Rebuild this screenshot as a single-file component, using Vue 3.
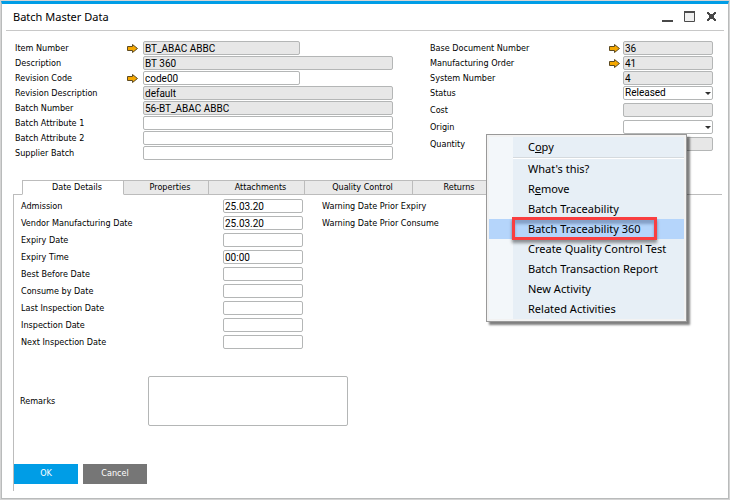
<script setup>
import { ref } from 'vue'

const leftFields = ref([
  { id: 'item', label: 'Item Number', value: 'BT_ABAC ABBC', locked: true, short: true, link: true },
  { id: 'desc', label: 'Description', value: 'BT 360', locked: true },
  { id: 'rev', label: 'Revision Code', value: 'code00', short: true, link: true },
  { id: 'revdesc', label: 'Revision Description', value: 'default', locked: true },
  { id: 'batch', label: 'Batch Number', value: '56-BT_ABAC ABBC', locked: true },
  { id: 'attr1', label: 'Batch Attribute 1', value: '' },
  { id: 'attr2', label: 'Batch Attribute 2', value: '' },
  { id: 'supplier', label: 'Supplier Batch', value: '' },
])

const rightFields = ref([
  { id: 'base', label: 'Base Document Number', value: '36', locked: true, link: true },
  { id: 'order', label: 'Manufacturing Order', value: '41', locked: true, link: true },
  { id: 'system', label: 'System Number', value: '4', locked: true },
  { id: 'status', label: 'Status', value: 'Released', options: ['Released', 'Locked'] },
  { id: 'cost', label: 'Cost', value: '', locked: true, spaced: true },
  { id: 'origin', label: 'Origin', value: '', options: ['', 'Production'], spaced: true },
  { id: 'quantity', label: 'Quantity', value: '', locked: true, spaced: true },
])

const dates = ref([
  { id: 'admission', label: 'Admission', value: '25.03.20', note: 'Warning Date Prior Expiry' },
  { id: 'vendor', label: 'Vendor Manufacturing Date', value: '25.03.20', note: 'Warning Date Prior Consume' },
  { id: 'expiry', label: 'Expiry Date', value: '' },
  { id: 'time', label: 'Expiry Time', value: '00:00' },
  { id: 'best', label: 'Best Before Date', value: '' },
  { id: 'consume', label: 'Consume by Date', value: '' },
  { id: 'last', label: 'Last Inspection Date', value: '' },
  { id: 'inspection', label: 'Inspection Date', value: '' },
  { id: 'next', label: 'Next Inspection Date', value: '' },
])

const remarks = ref('')
const tabs = ['Date Details', 'Properties', 'Attachments', 'Quality Control', 'Returns']
const activeTab = ref('Date Details')
const menuItems = [
  'What\'s this?',
  'Remove',
  'Batch Traceability',
  'Batch Traceability 360',
  'Create Quality Control Test',
  'Batch Transaction Report',
  'New Activity',
  'Related Activities',
]
</script>

<template>
  <main class="window">
    <header class="titlebar">
      <h1>Batch Master Data</h1>
      <div class="controls">
        <button type="button" aria-label="Minimize">
          <svg viewBox="0 0 12 12"><path d="M0 9h11v2H0z" fill="#484848" /></svg>
        </button>
        <button type="button" aria-label="Maximize">
          <svg viewBox="0 0 12 12">
            <path d="M.5 .5h10v10H.5z" fill="#f0f0f0" stroke="#4b4b4b" />
            <path d="M0 0h11v2H0z" fill="#4b4b4b" />
          </svg>
        </button>
        <button type="button" aria-label="Close">
          <svg viewBox="0 0 12 12"><path d="M1 1h2v1h1v1h3V2h1V1h2v2H9v1H8v3h1v1h1v2H8V9H7V8H4v1H3v1H1V8h1V7h1V4H2V3H1z" fill="#484848" /></svg>
        </button>
      </div>
    </header>

    <section class="summary">
      <div class="fields">
        <div v-for="f in leftFields" :key="f.id" class="row">
          <label :for="f.id">{{ f.label }}</label>
          <svg v-if="f.link" class="arrow" viewBox="0 0 11 9"><path d="M.5 2.500h5v-2l5 4-5 4v-2h-5z" fill="#f5a800" stroke="#5c4a22" /></svg>
          <input :id="f.id" v-model="f.value" type="text" :readonly="f.locked" :class="{ locked: f.locked, short: f.short }">
        </div>
      </div>
      <div class="fields side">
        <div v-for="f in rightFields" :key="f.id" class="row" :class="{ spaced: f.spaced }">
          <label :for="f.id">{{ f.label }}</label>
          <svg v-if="f.link" class="arrow" viewBox="0 0 11 9"><path d="M.5 2.500h5v-2l5 4-5 4v-2h-5z" fill="#f5a800" stroke="#5c4a22" /></svg>
          <select v-if="f.options" :id="f.id" v-model="f.value">
            <option v-for="o in f.options" :key="o" :value="o">{{ o }}</option>
          </select>
          <input v-else :id="f.id" v-model="f.value" type="text" readonly class="locked">
        </div>
      </div>
    </section>

    <nav class="tabs" role="tablist">
      <button
        v-for="t in tabs" :key="t" type="button" role="tab"
        :aria-selected="t === activeTab" :class="{ active: t === activeTab }"
        @click="activeTab = t"
      >{{ t }}</button>
    </nav>

    <section class="panel">
      <div v-for="d in dates" :key="d.id" class="date-row">
        <label :for="d.id">{{ d.label }}</label>
        <input :id="d.id" v-model="d.value" type="text">
        <span>{{ d.note }}</span>
      </div>
      <div class="remarks">
        <label for="remarks">Remarks</label>
        <textarea id="remarks" v-model="remarks"></textarea>
      </div>
      <footer class="actions">
        <button type="button" class="ok">OK</button>
        <button type="button" class="cancel">Cancel</button>
      </footer>
    </section>

    <div class="menu" role="menu">
      <button type="button" role="menuitem">C<u>o</u>py</button>
      <hr>
      <button
        v-for="m in menuItems" :key="m" type="button" role="menuitem"
        :class="{ selected: m === 'Batch Traceability 360' }"
      ><template v-if="m === 'Remove'">R<u>e</u>move</template><template v-else>{{ m }}</template></button>
    </div>
  </main>
</template>

<style>
body {
  background: #d4d4d4;
}
</style>

<style scoped>
.window {
  position: relative;
  box-sizing: border-box;
  display: flex;
  flex-direction: column;
  min-height: calc(100vh - 2px);
  margin: 1px;
  border: 1px solid #b9bbbb;
  border-top: 3px solid #009de6;
  background: #fff;
  color: #000;
  font: 9px/14px "DejaVu Sans Condensed", Tahoma, sans-serif;
}
button, input, select, textarea {
  box-sizing: border-box;
  margin: 0;
  font: inherit;
  color: inherit;
}
.titlebar {
  display: flex;
  align-items: center;
  justify-content: space-between;
  height: 26px;
  margin: 0 4px;
  padding: 0 6px 0 7px;
  border-bottom: 1px solid #c8c8c8;
}
h1 {
  margin: 0;
  font: 11px/26px "Noto Sans", "Segoe UI", sans-serif;
}
.controls {
  display: flex;
  gap: 10px;
}
.controls button {
  width: 12px;
  height: 12px;
  padding: 0;
  border: 0;
  background: none;
}
.controls svg {
  display: block;
  width: 12px;
  height: 12px;
}
.summary {
  display: grid;
  grid-template-columns: 378px 283px;
  justify-content: space-between;
  padding: 10px 15px 0 13px;
}
.fields {
  display: flex;
  flex-direction: column;
  gap: 1px;
}
.row {
  display: flex;
  align-items: center;
  height: 14px;
}
.row label {
  flex: 1;
}
.arrow {
  width: 11px;
  height: 9px;
  margin-right: 5px;
}
.side .arrow {
  margin-right: 3px;
}
.spaced {
  margin-top: 2px;
}
input, select, textarea {
  padding: 0 1px;
  border: 1px solid #b4b6b6;
  border-radius: 2px;
  background: #fff;
  font: 10px/12px Roboto, Tahoma, sans-serif;
}
input, select {
  height: 14px;
}
.locked {
  background: #e7e7e7;
}
.fields input {
  width: 250px;
}
.fields .short {
  width: 157px;
  margin-right: 93px;
}
.side input, .side select {
  width: 90px;
}
select {
  appearance: none;
}
.row:has(select)::after {
  content: "";
  width: 0;
  margin-left: -8px;
  margin-right: 2px;
  border: 3px solid transparent;
  border-top-color: #303030;
  border-bottom: 0;
  pointer-events: none;
}
.tabs {
  display: flex;
  height: 15px;
  margin: 20px 6px 0 11px;
  padding-left: 9px;
  background: linear-gradient(#bcbcbc, #bcbcbc) bottom / 100% 1px no-repeat;
}
.tabs button {
  width: 85px;
  padding: 0 0 0 8px;
  border: 1px solid #bcbcbc;
  border-left: 0;
  background: #e9e9e9;
  line-height: 13px;
}
.tabs .active {
  width: 102px;
  border-left: 1px solid #bcbcbc;
  border-bottom-color: #fff;
  background: #fff;
}
.tabs button:nth-child(3) {
  width: 96px;
}
.tabs button:nth-child(4) {
  width: 108px;
}
.panel {
  display: flex;
  flex: 1;
  flex-direction: column;
  margin: 0 6px 7px 11px;
  padding: 4px 0 7px;
  border-left: 1px solid #bcbcbc;
}
.date-row {
  display: grid;
  grid-template-columns: 202px 80px 1fr;
  align-items: center;
  height: 14px;
  margin-bottom: 3px;
  padding-left: 7px;
}
.date-row span {
  padding-left: 19px;
}
.remarks {
  display: flex;
  align-items: center;
  margin-top: 24px;
  padding-left: 6px;
}
.remarks label {
  width: 128px;
}
textarea {
  width: 200px;
  height: 50px;
  resize: none;
}
.actions {
  display: flex;
  gap: 5px;
  margin-top: auto;
}
.actions button {
  width: 64px;
  height: 20px;
  padding: 0 0 2px;
  border: 0;
  background: #767676;
  color: #fff;
}
.actions .ok {
  background: #009de6;
}
.menu {
  position: absolute;
  top: 130px;
  right: 41px;
  width: 201px;
  box-sizing: border-box;
  padding: 2px;
  border: 1px solid #999;
  background: linear-gradient(90deg, #f3f7fa 24px, #e7eff6 24px) content-box, #f2f2f2;
  box-shadow: 3px 3px 2px rgba(0, 0, 0, 0.5);
  font: 11px/20px "Noto Sans", "Segoe UI", sans-serif;
}
.menu button {
  position: relative;
  display: block;
  width: 100%;
  height: 20px;
  padding: 0 0 0 39px;
  border: 0;
  background: none;
  text-align: left;
  white-space: nowrap;
}
.menu hr {
  height: 1px;
  margin: 0 0 0 24px;
  border: 0;
  border-bottom: 1px solid #fff;
  background: #d5dade;
}
.menu .selected {
  background: #b5d5fb;
}
.selected::after {
  content: "";
  position: absolute;
  top: -2px;
  left: 23px;
  box-sizing: border-box;
  width: 145px;
  height: 23px;
  border: 3px solid #f93e40;
  box-shadow: 0 3px 3px rgba(0, 0, 0, 0.4), inset 0 4px 3px rgba(60, 80, 120, 0.4);
}
</style>
